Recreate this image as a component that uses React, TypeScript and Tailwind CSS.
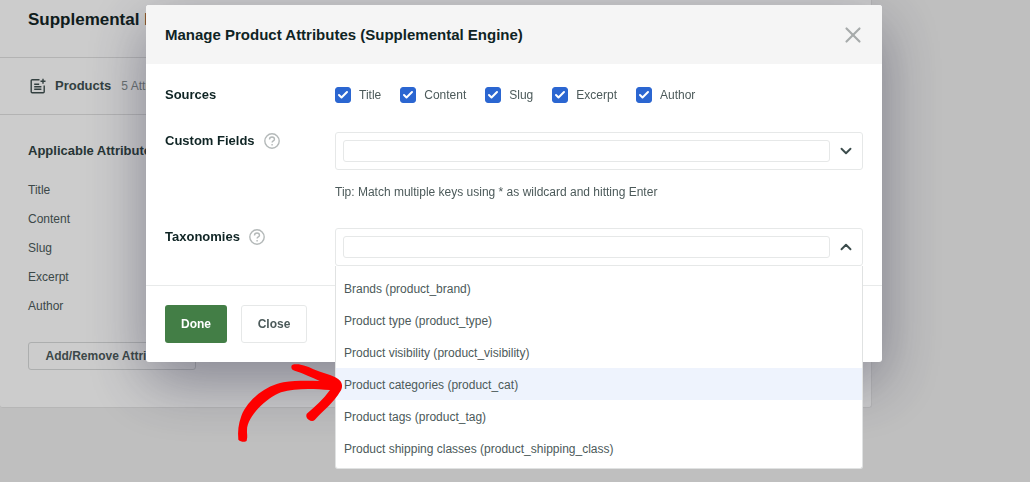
import React from 'react';
import { Check, ChevronDown, ChevronUp, X } from 'lucide-react';

const attributes = ['Title', 'Content', 'Slug', 'Excerpt', 'Author'];

const taxonomies = [
  { name: 'Brands', slug: 'product_brand' },
  { name: 'Product type', slug: 'product_type' },
  { name: 'Product visibility', slug: 'product_visibility' },
  { name: 'Product categories', slug: 'product_cat' },
  { name: 'Product tags', slug: 'product_tag' },
  { name: 'Product shipping classes', slug: 'product_shipping_class' }
];

const activeSlug = 'product_cat';

const ProductsIcon: React.FC = () => (
  <svg viewBox="0 0 16 16" className="w-4 h-4" fill="none" stroke="currentColor" strokeWidth="1.4" aria-hidden="true">
    <path d="M9.5 1.7H2.2a1 1 0 0 0-1 1v11a1 1 0 0 0 1 1h11a1 1 0 0 0 1-1V7.5" />
    <path d="M4.2 6.3h5M4.2 8.8h7.2M4.2 11.3h7.2" />
    <path d="M13 .7v5M10.5 3.2h5" />
  </svg>
);

const HelpIcon: React.FC = () => (
  <svg viewBox="0 0 16 16" className="w-4 h-4" fill="none" stroke="currentColor" strokeWidth="1.4" aria-hidden="true">
    <circle cx="8" cy="8" r="7.2" />
    <path d="M5.5 6.4c0-1.5 1.1-2.4 2.5-2.4s2.5.9 2.5 2.2c0 1.7-2.4 1.7-2.4 3.4" />
    <path d="M8.1 11v1.5" />
  </svg>
);

const Arrow: React.FC = () => (
  <svg
    viewBox="708 246 324 243"
    className="absolute left-[90px] top-[357px] w-[108px] h-[81px] pointer-events-none"
    fill="#fe0000"
    aria-hidden="true"
  >
    <path d="M874 260C874 253 883 252 896 253C918 256 934 266 956 274C979 282 1008 289 1021 303C1028 312 1028 325 1021 334C1000 369 972 390 944 420C939 425 932 424 926 419C918 415 917 404 922 400C944 380 970 358 990 330C943 326 887 323 843 337C797 355 742 409 741 451C740 460 744 469 740 482C736 487 722 486 715 479C713 454 715 432 724 408C744 358 797 317 850 307C887 301 923 302 959 303C935 292 912 281 884 272C876 270 874 265 874 260Z" />
  </svg>
);

interface FieldLabelProps {
  htmlFor: string;
  text: string;
}

const FieldLabel: React.FC<FieldLabelProps> = ({ htmlFor, text }) => (
  <div className="w-[170px] shrink-0 flex items-center gap-[9px] h-[18px]">
    <label htmlFor={htmlFor} className="font-bold text-[13px] text-[#0f2424]">{text}</label>
    <button type="button" aria-label={`Help: ${text}`} className="text-[#b4b9b9]">
      <HelpIcon />
    </button>
  </div>
);

interface ComboBoxProps {
  id: string;
  open?: boolean;
}

const ComboBox: React.FC<ComboBoxProps> = ({ id, open = false }) => (
  <div className="relative">
    <div className="flex items-center h-[38px] border border-[#e6e8e8] rounded-[3px] bg-white pl-[7px]">
      <input
        id={id}
        type="text"
        role="combobox"
        aria-expanded={open}
        className="grow min-w-0 h-[22px] border border-[#e6e8e8] rounded-[3px] px-2 outline-none"
      />
      <button type="button" aria-label="Toggle options" className="w-8 flex justify-center text-[#3c4c4c]">
        {open ? <ChevronUp size={18} strokeWidth={2.5} /> : <ChevronDown size={18} strokeWidth={2.5} />}
      </button>
    </div>
    {open && (
      <ul
        role="listbox"
        className="absolute top-full left-0 right-0 bg-white border border-t-0 border-[#e0e2e2] rounded-b-[3px] pt-1.5 pb-1"
      >
        {taxonomies.map((tax) => (
          <li
            key={tax.slug}
            role="option"
            aria-selected={tax.slug === activeSlug}
            className={`h-8 flex items-center px-2 pt-0.5 ${tax.slug === activeSlug ? 'bg-[#eef3fd]' : ''}`}
          >
            {tax.name} ({tax.slug})
          </li>
        ))}
      </ul>
    )}
  </div>
);

const EnginePage: React.FC = () => (
  <main className="mr-[158px] h-[408px] bg-white border-r border-b border-[#e4e4e4] rounded-b-[3px] overflow-hidden">
    <header className="h-[58px] flex items-center pb-4 pl-7 border-b border-[#e0e0e0]">
      <h1 className="font-bold text-[17px] text-[#122525]">Supplemental Engine</h1>
    </header>
    <div className="h-[57px] flex items-center pl-[30px] border-b border-[#e0e0e0] text-[#405050]">
      <ProductsIcon />
      <h2 className="font-bold text-[13px] ml-[9px]">Products</h2>
      <span className="text-[#858e8e] ml-2.5">5 Attributes</span>
    </div>
    <section className="pl-7 pt-[26px]">
      <h3 className="font-bold text-[13px] leading-5 text-[#304343]">Applicable Attributes</h3>
      <ul className="mt-3.5">
        {attributes.map((name) => (
          <li key={name} className="h-[29px] flex items-center">{name}</li>
        ))}
      </ul>
      <button type="button" className="mt-[22px] w-[168px] h-7 border border-[#d8dada] rounded-[3px] font-bold">
        Add/Remove Attributes
      </button>
    </section>
  </main>
);

const AttributesDialog: React.FC = () => (
  <div role="dialog" aria-modal="true" aria-labelledby="dialog-title" className="relative w-full max-w-[736px] bg-white rounded-[3px] shadow-[0_20px_60px_rgba(30,30,60,0.42)]">
    <header className="h-[59px] flex items-center justify-between pl-[19px] pr-4 bg-[#f5f5f5] rounded-t-[3px]">
      <h2 id="dialog-title" className="font-bold text-[15px] text-[#0f2424]">
        Manage Product Attributes (Supplemental Engine)
      </h2>
      <button type="button" aria-label="Close dialog" className="text-[#a7abab]">
        <X size={26} strokeWidth={2} />
      </button>
    </header>

    <div className="h-[222px] px-[19px] pt-[22px] border-b border-[#e8eaea]">
      <div role="group" aria-labelledby="sources-label" className="flex items-center h-[18px]">
        <span id="sources-label" className="w-[170px] shrink-0 font-bold text-[13px] text-[#0f2424]">Sources</span>
        <div className="flex gap-[19px]">
          {attributes.map((name) => (
            <label key={name} className="flex items-center gap-2">
              <span className="grid place-items-center">
                <input
                  type="checkbox"
                  defaultChecked
                  className="col-start-1 row-start-1 appearance-none size-4 rounded-[3px] border border-[#2b66d1] checked:bg-[#2b66d1]"
                />
                <Check size={12} strokeWidth={4} className="col-start-1 row-start-1 text-white pointer-events-none" />
              </span>
              {name}
            </label>
          ))}
        </div>
      </div>

      <div className="flex mt-7">
        <FieldLabel htmlFor="custom-fields" text="Custom Fields" />
        <div className="grow">
          <ComboBox id="custom-fields" />
          <p className="mt-3 leading-5">Tip: Match multiple keys using * as wildcard and hitting Enter</p>
        </div>
      </div>

      <div className="flex mt-[26px]">
        <FieldLabel htmlFor="taxonomies" text="Taxonomies" />
        <div className="grow">
          <ComboBox id="taxonomies" open />
        </div>
      </div>
    </div>

    <footer className="flex gap-3.5 pl-[19px] py-[19px]">
      <button type="button" className="h-[38px] w-[62px] rounded-[3px] bg-[#437e46] text-white font-bold">
        Done
      </button>
      <button type="button" className="h-[38px] w-[66px] rounded-[3px] border border-[#e6e8e8] bg-white font-bold">
        Close
      </button>
    </footer>
    <Arrow />
  </div>
);

const App: React.FC = () => {
  return (
    <div className="min-h-screen bg-[#efefef] text-xs text-[#4c5a5a] font-['Liberation_Sans',Arial,sans-serif]">
      <EnginePage />
      <div className="fixed inset-0 bg-black/20 flex justify-center items-start pt-[5px] pr-0.5">
        <AttributesDialog />
      </div>
    </div>
  );
};

export default App;
